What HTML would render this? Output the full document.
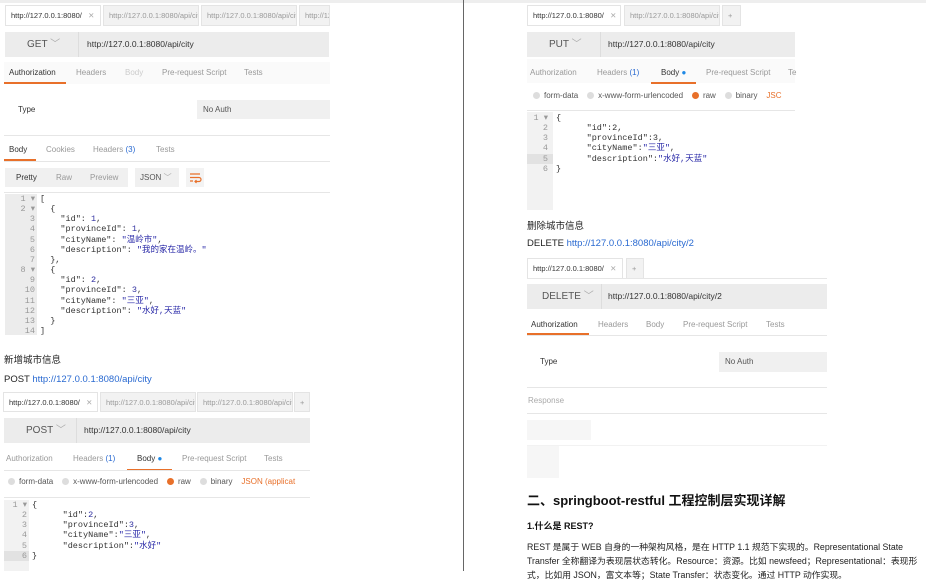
<!DOCTYPE html>
<html><head><meta charset="utf-8">
<style>
*{margin:0;padding:0;box-sizing:border-box}
body{width:926px;height:571px;overflow:hidden;background:#fff;font-family:"Liberation Sans","Noto Sans CJK SC",sans-serif;position:relative;color:#333}
.a{position:absolute;white-space:nowrap}
.t{font-size:7.5px;color:#999;line-height:20px;padding-left:5px;overflow:hidden;background:#f2f2f2;border:1px solid #e4e4e4}
.t1{background:#fff;color:#333}
.bar{background:#ececec}
.m{font-size:10px;color:#555;line-height:25px;border-right:1px solid #ddd;padding-left:22px;height:25px}
.u{font-size:8.5px;color:#333;line-height:25px}
.tab{font-size:8px;color:#999;line-height:12px}
.dk{color:#333}
.ul{height:2px;background:#e8702a}
.ln{height:1px;background:#e6e6e6}
.g{background:#f0f0f0}
.code{font-family:"Liberation Mono","Noto Sans CJK SC",monospace;font-size:8.5px;line-height:10.15px;color:#333}
.num{color:#999;text-align:right}
.s{color:#2a2aa8}
.n{color:#3030a0}
.rd{display:inline-block;width:7px;height:7px;border-radius:50%;background:#ddd;margin-right:4px;vertical-align:-1px}
.k{color:#2a6ad1}
</style></head><body>
<div class="a" style="left:0;top:0;width:926px;height:3px;background:#eee"></div>
<div class="a" style="left:463px;top:0;width:1px;height:571px;background:#666"></div>

<!-- LEFT GET -->
<div class="a t t1" style="left:5px;top:5px;width:96px;height:21px">http://127.0.0.1:8080/ &nbsp;&nbsp;<span style="color:#aaa">✕</span></div>
<div class="a t" style="left:103px;top:5px;width:96px;height:21px">http://127.0.0.1:8080/api/cit</div>
<div class="a t" style="left:201px;top:5px;width:96px;height:21px">http://127.0.0.1:8080/api/cit</div>
<div class="a t" style="left:299px;top:5px;width:31px;height:21px">http://12</div>
<div class="a bar" style="left:5px;top:32px;width:324px;height:25px"></div>
<div class="a m" style="left:5px;top:32px;width:74px">GET <span style="color:#aaa">﹀</span></div>
<div class="a u" style="left:87px;top:32px">http://127.0.0.1:8080/api/city</div>
<div class="a" style="left:4px;top:62px;width:326px;height:22px;background:#fafafa"></div>
<div class="a tab dk" style="left:9px;top:67px">Authorization</div>
<div class="a tab" style="left:76px;top:67px">Headers</div>
<div class="a tab" style="left:125px;top:67px;color:#ccc">Body</div>
<div class="a tab" style="left:162px;top:67px">Pre-request Script</div>
<div class="a tab" style="left:244px;top:67px">Tests</div>
<div class="a ul" style="left:4px;top:82px;width:62px"></div>
<div class="a tab dk" style="left:18px;top:104px">Type</div>
<div class="a g" style="left:197px;top:100px;width:133px;height:19px"></div>
<div class="a tab" style="left:203px;top:104px;color:#555">No Auth</div>
<div class="a ln" style="left:4px;top:135px;width:326px"></div>
<div class="a tab dk" style="left:9px;top:144px">Body</div>
<div class="a tab" style="left:46px;top:144px">Cookies</div>
<div class="a tab" style="left:93px;top:144px">Headers <span class="k">(3)</span></div>
<div class="a tab" style="left:156px;top:144px">Tests</div>
<div class="a ul" style="left:4px;top:159px;width:32px"></div>
<div class="a ln" style="left:4px;top:161px;width:326px"></div>
<div class="a g" style="left:5px;top:168px;width:123px;height:19px"></div>
<div class="a tab dk" style="left:16px;top:172px">Pretty</div>
<div class="a tab" style="left:56px;top:172px">Raw</div>
<div class="a tab" style="left:90px;top:172px">Preview</div>
<div class="a g" style="left:135px;top:168px;width:44px;height:19px"></div>
<div class="a tab" style="left:140px;top:172px;color:#555">JSON <span style="color:#aaa">﹀</span></div>
<div class="a" style="left:186px;top:168px;width:18px;height:19px;background:#f3f3f3"></div>
<svg class="a" style="left:188px;top:171px" width="14" height="13"><path d="M2 3h10M2 6.5h9a2 2 0 0 1 0 4H7M8.5 9l-1.5 1.5 1.5 1.5M2 10h3" stroke="#e8702a" stroke-width="1.2" fill="none"/></svg>
<div class="a ln" style="left:4px;top:192px;width:326px"></div>
<div class="a" style="left:5px;top:194px;width:32px;height:141px;background:#ececec"></div>
<div class="a code num" style="left:5px;top:194px;width:30px">1 ▾<br>2 ▾<br>3<br>4<br>5<br>6<br>7<br>8 ▾<br>9<br>10<br>11<br>12<br>13<br>14</div>
<div class="a code" style="left:40px;top:194px">[<br>&nbsp;&nbsp;{<br>&nbsp;&nbsp;&nbsp;&nbsp;"id": <span class="n">1</span>,<br>&nbsp;&nbsp;&nbsp;&nbsp;"provinceId": <span class="n">1</span>,<br>&nbsp;&nbsp;&nbsp;&nbsp;"cityName": <span class="s">"温岭市"</span>,<br>&nbsp;&nbsp;&nbsp;&nbsp;"description": <span class="s">"我的家在温岭。"</span><br>&nbsp;&nbsp;},<br>&nbsp;&nbsp;{<br>&nbsp;&nbsp;&nbsp;&nbsp;"id": <span class="n">2</span>,<br>&nbsp;&nbsp;&nbsp;&nbsp;"provinceId": <span class="n">3</span>,<br>&nbsp;&nbsp;&nbsp;&nbsp;"cityName": <span class="s">"三亚"</span>,<br>&nbsp;&nbsp;&nbsp;&nbsp;"description": <span class="s">"水好,天蓝"</span><br>&nbsp;&nbsp;}<br>]</div>
<div class="a" style="left:4px;top:352px;font-size:9.5px;color:#222">新增城市信息</div>
<div class="a" style="left:4px;top:374px;font-size:9.5px;color:#222">POST <span class="k">http://127.0.0.1:8080/api/city</span></div>

<!-- LEFT POST -->
<div class="a t t1" style="left:3px;top:392px;width:95px;height:20px;line-height:19px">http://127.0.0.1:8080/ &nbsp;&nbsp;<span style="color:#aaa">✕</span></div>
<div class="a t" style="left:100px;top:392px;width:96px;height:20px;line-height:19px">http://127.0.0.1:8080/api/cit</div>
<div class="a t" style="left:197px;top:392px;width:96px;height:20px;line-height:19px">http://127.0.0.1:8080/api/cit</div>
<div class="a t" style="left:294px;top:392px;width:16px;height:20px;line-height:19px">+</div>
<div class="a bar" style="left:4px;top:418px;width:306px;height:25px"></div>
<div class="a m" style="left:4px;top:418px;width:73px">POST <span style="color:#aaa">﹀</span></div>
<div class="a u" style="left:84px;top:418px">http://127.0.0.1:8080/api/city</div>
<div class="a tab" style="left:6px;top:453px">Authorization</div>
<div class="a tab" style="left:73px;top:453px">Headers <span class="k">(1)</span></div>
<div class="a tab dk" style="left:137px;top:453px">Body <span style="color:#1e88e5">●</span></div>
<div class="a tab" style="left:182px;top:453px">Pre-request Script</div>
<div class="a tab" style="left:264px;top:453px">Tests</div>
<div class="a ul" style="left:127px;top:469px;width:45px"></div>
<div class="a ln" style="left:4px;top:470px;width:306px"></div>
<div class="a tab dk" style="left:8px;top:476px;color:#555"><span class="rd"></span>form-data &nbsp;&nbsp;&nbsp;<span class="rd"></span>x-www-form-urlencoded &nbsp;&nbsp;&nbsp;<span class="rd" style="background:#e8702a"></span>raw &nbsp;&nbsp;&nbsp;<span class="rd"></span>binary &nbsp;&nbsp;&nbsp;<span style="color:#e8702a">JSON (applicat</span></div>
<div class="a ln" style="left:4px;top:497px;width:306px"></div>
<div class="a" style="left:4px;top:500px;width:25px;height:71px;background:#f2f2f2"></div>
<div class="a" style="left:4px;top:551px;width:25px;height:10px;background:#e2e2e2"></div>
<div class="a code num" style="left:4px;top:500px;width:23px">1 ▾<br>2<br>3<br>4<br>5<br>6</div>
<div class="a code" style="left:32px;top:500px">{<br>&nbsp;&nbsp;&nbsp;&nbsp;&nbsp;&nbsp;"id":<span class="n">2</span>,<br>&nbsp;&nbsp;&nbsp;&nbsp;&nbsp;&nbsp;"provinceId":<span class="n">3</span>,<br>&nbsp;&nbsp;&nbsp;&nbsp;&nbsp;&nbsp;"cityName":<span class="s">"三亚"</span>,<br>&nbsp;&nbsp;&nbsp;&nbsp;&nbsp;&nbsp;"description":<span class="s">"水好"</span><br>}</div>

<!-- RIGHT PUT -->
<div class="a t t1" style="left:527px;top:5px;width:94px;height:21px">http://127.0.0.1:8080/ &nbsp;&nbsp;<span style="color:#aaa">✕</span></div>
<div class="a t" style="left:624px;top:5px;width:96px;height:21px">http://127.0.0.1:8080/api/cit</div>
<div class="a t" style="left:722px;top:5px;width:19px;height:21px">+</div>
<div class="a bar" style="left:527px;top:32px;width:268px;height:25px"></div>
<div class="a m" style="left:527px;top:32px;width:74px">PUT <span style="color:#aaa">﹀</span></div>
<div class="a u" style="left:608px;top:32px">http://127.0.0.1:8080/api/city</div>
<div class="a" style="left:527px;top:59px;width:268px;height:24px;background:#fafafa"></div>
<div class="a tab" style="left:530px;top:67px">Authorization</div>
<div class="a tab" style="left:597px;top:67px">Headers <span class="k">(1)</span></div>
<div class="a tab dk" style="left:661px;top:67px">Body <span style="color:#1e88e5">●</span></div>
<div class="a tab" style="left:706px;top:67px">Pre-request Script</div>
<div class="a tab" style="left:788px;top:67px">Te</div>
<div class="a ul" style="left:651px;top:82px;width:45px"></div>
<div class="a tab" style="left:533px;top:90px;color:#555"><span class="rd"></span>form-data &nbsp;&nbsp;&nbsp;<span class="rd"></span>x-www-form-urlencoded &nbsp;&nbsp;&nbsp;<span class="rd" style="background:#e8702a"></span>raw &nbsp;&nbsp;&nbsp;<span class="rd"></span>binary &nbsp;&nbsp;&nbsp;<span style="color:#e8702a">JSC</span></div>
<div class="a ln" style="left:527px;top:110px;width:268px"></div>
<div class="a" style="left:527px;top:112px;width:26px;height:98px;background:#f2f2f2"></div>
<div class="a" style="left:527px;top:154px;width:26px;height:10px;background:#e2e2e2"></div>
<div class="a code num" style="left:527px;top:113px;width:21px">1 ▾<br>2<br>3<br>4<br>5<br>6</div>
<div class="a code" style="left:556px;top:113px">{<br>&nbsp;&nbsp;&nbsp;&nbsp;&nbsp;&nbsp;"id":2,<br>&nbsp;&nbsp;&nbsp;&nbsp;&nbsp;&nbsp;"provinceId":3,<br>&nbsp;&nbsp;&nbsp;&nbsp;&nbsp;&nbsp;"cityName":<span class="s">"三亚"</span>,<br>&nbsp;&nbsp;&nbsp;&nbsp;&nbsp;&nbsp;"description":<span class="s">"水好,天蓝"</span><br>}</div>
<div class="a" style="left:527px;top:218px;font-size:9.5px;color:#222">删除城市信息</div>
<div class="a" style="left:527px;top:238px;font-size:9.5px;color:#222">DELETE <span class="k">http://127.0.0.1:8080/api/city/2</span></div>

<!-- RIGHT DELETE -->
<div class="a t t1" style="left:527px;top:258px;width:96px;height:21px">http://127.0.0.1:8080/ &nbsp;&nbsp;<span style="color:#aaa">✕</span></div>
<div class="a t" style="left:626px;top:258px;width:18px;height:21px">+</div>
<div class="a ln" style="left:527px;top:278px;width:300px"></div>
<div class="a bar" style="left:527px;top:284px;width:300px;height:25px"></div>
<div class="a m" style="left:527px;top:284px;width:75px;padding-left:15px">DELETE <span style="color:#aaa">﹀</span></div>
<div class="a u" style="left:608px;top:284px">http://127.0.0.1:8080/api/city/2</div>
<div class="a tab dk" style="left:531px;top:319px">Authorization</div>
<div class="a tab" style="left:598px;top:319px">Headers</div>
<div class="a tab" style="left:646px;top:319px">Body</div>
<div class="a tab" style="left:683px;top:319px">Pre-request Script</div>
<div class="a tab" style="left:766px;top:319px">Tests</div>
<div class="a ul" style="left:527px;top:333px;width:62px"></div>
<div class="a ln" style="left:527px;top:335px;width:300px"></div>
<div class="a tab dk" style="left:540px;top:356px">Type</div>
<div class="a g" style="left:719px;top:352px;width:108px;height:20px"></div>
<div class="a tab" style="left:725px;top:356px;color:#555">No Auth</div>
<div class="a ln" style="left:527px;top:387px;width:300px"></div>
<div class="a tab" style="left:528px;top:395px;color:#aaa">Response</div>
<div class="a ln" style="left:527px;top:413px;width:300px"></div>
<div class="a" style="left:527px;top:420px;width:64px;height:20px;background:#f6f6f6"></div>
<div class="a ln" style="left:527px;top:445px;width:300px;background:#f2f2f2"></div>
<div class="a" style="left:527px;top:446px;width:32px;height:32px;background:#f6f6f6"></div>
<div class="a" style="left:527px;top:490px;font-size:13px;font-weight:bold;color:#111">二、springboot-restful 工程控制层实现详解</div>
<div class="a" style="left:527px;top:519px;font-size:9px;font-weight:bold;color:#111">1.什么是 REST?</div>
<div class="a" style="left:527px;top:540px;font-size:8.8px;color:#222;line-height:14px;width:395px;white-space:normal">REST 是属于 WEB 自身的一种架构风格，是在 HTTP 1.1 规范下实现的。Representational State Transfer 全称翻译为表现层状态转化。Resource：资源。比如 newsfeed；Representational：表现形式，比如用 JSON，富文本等；State Transfer：状态变化。通过 HTTP 动作实现。</div>
</body></html>
